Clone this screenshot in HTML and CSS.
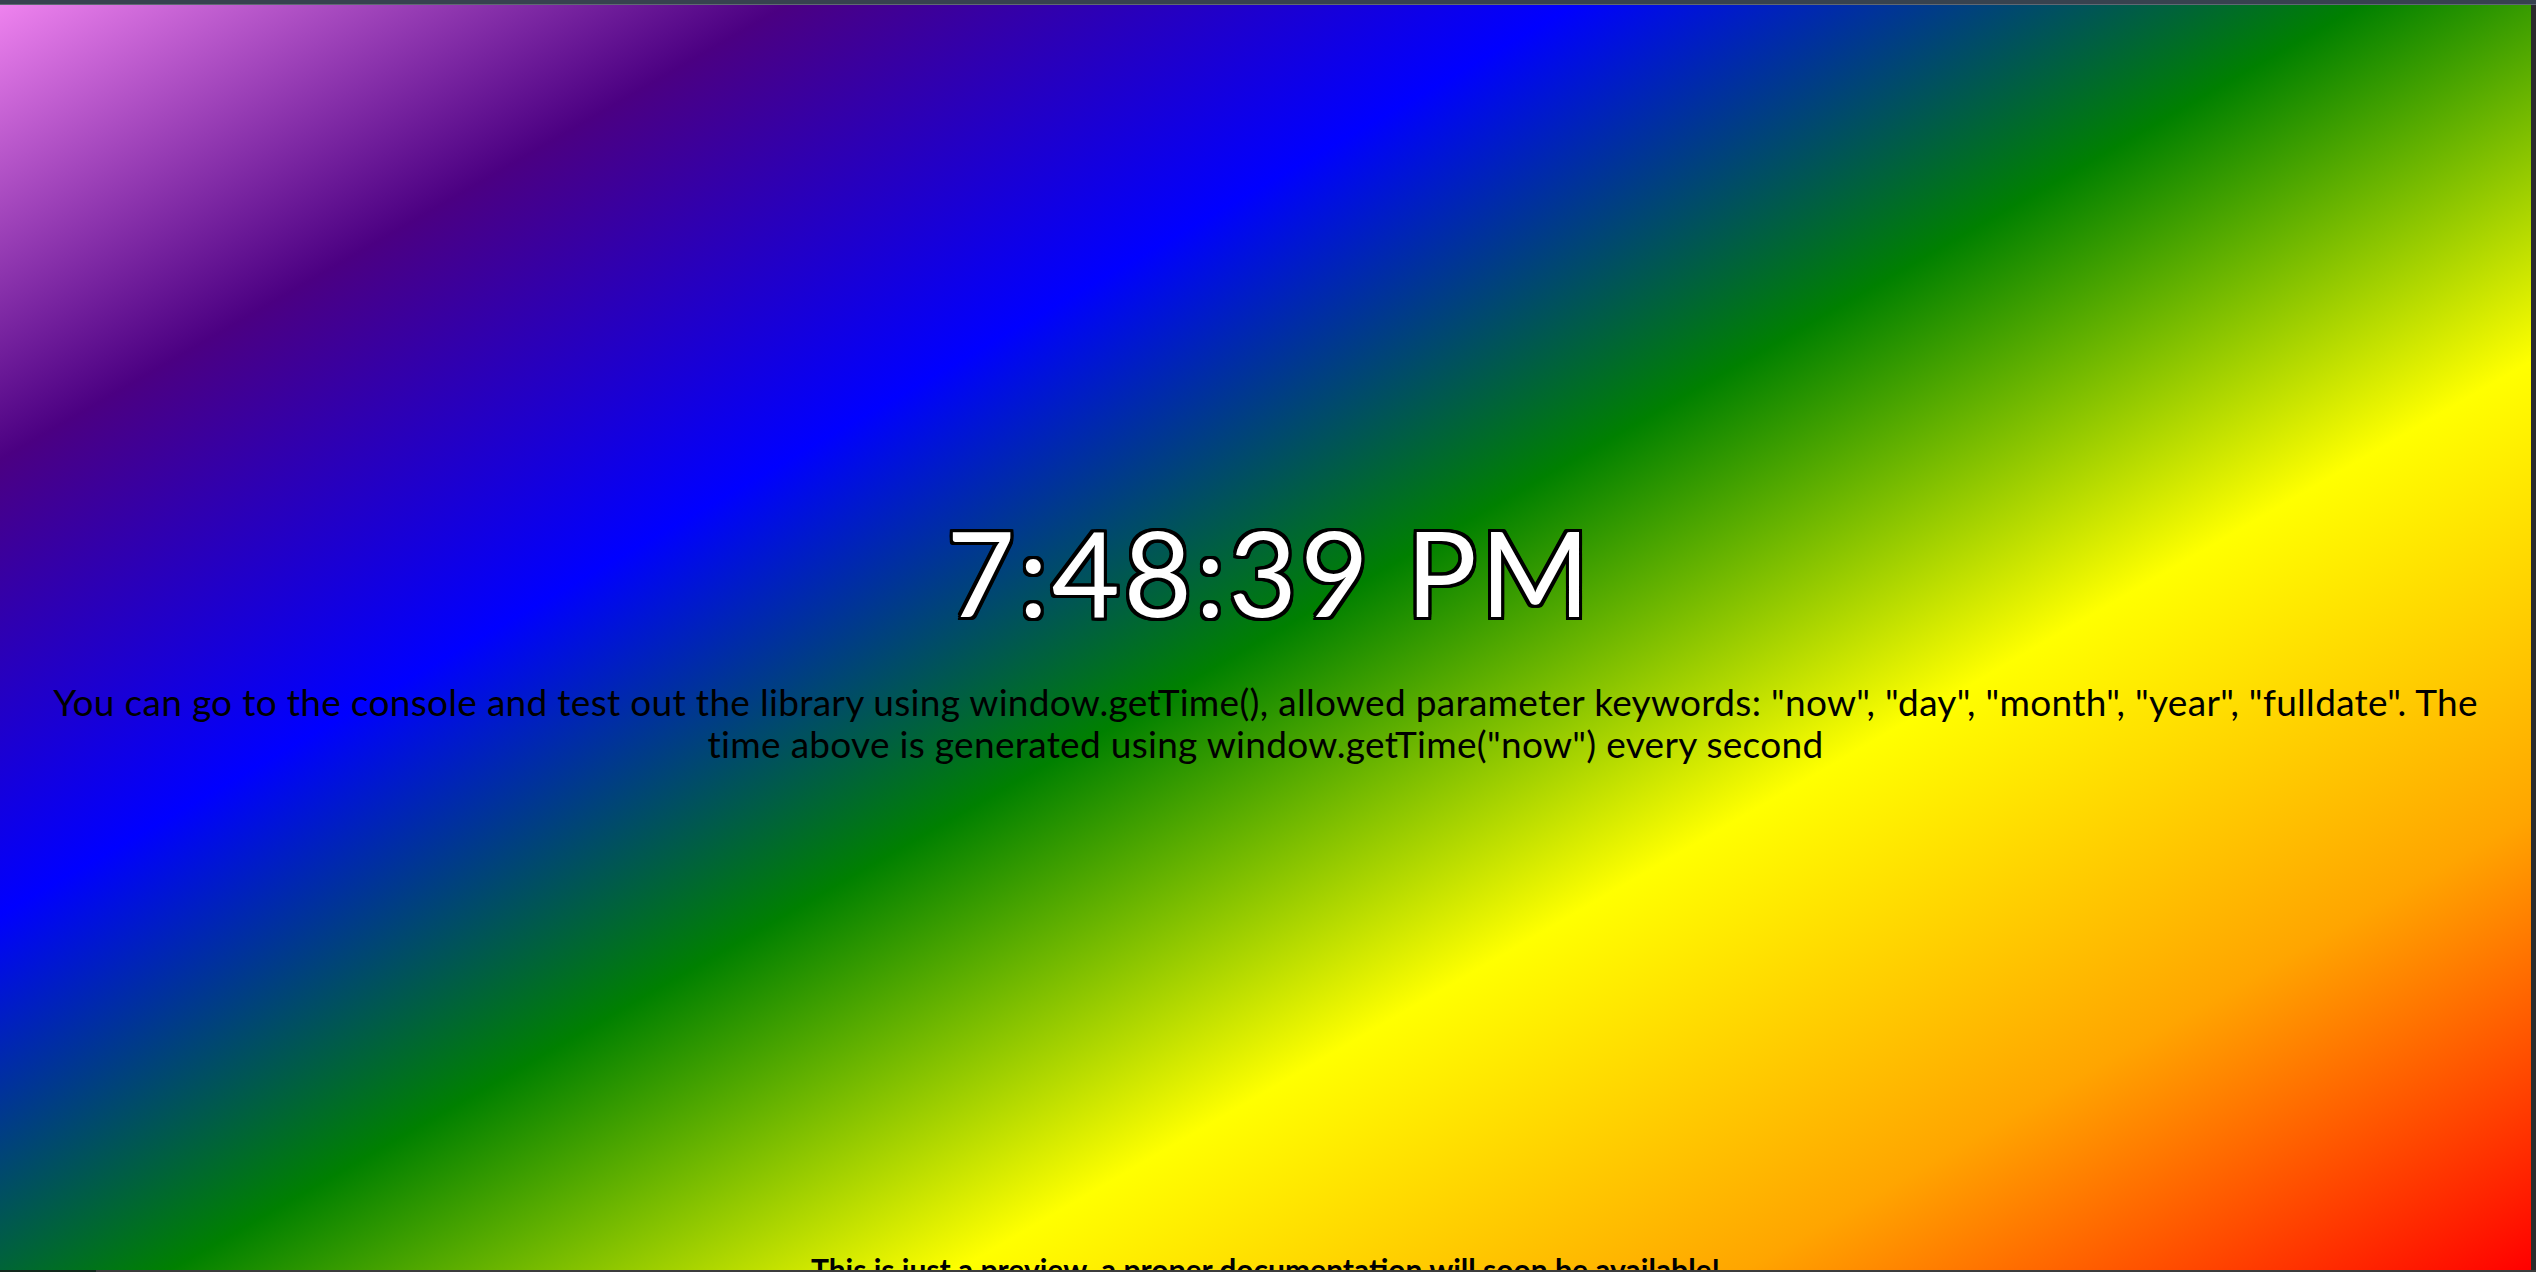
FILE: index.html
```html
<!DOCTYPE html>
<html lang="en">
<head>
<meta charset="utf-8">
<title>getTime preview</title>
<link rel="stylesheet" href="styles.css">
</head>
<body>
<div class="frame">
  <div class="frame-top"></div>
  <div class="frame-middle">
    <div class="page">
      <div class="clock">7:48:39 PM</div>
      <p class="info">You can go to the console and test out the library using window.getTime(), allowed parameter keywords: "now", "day", "month", "year", "fulldate". The<br>time above is generated using window.getTime("now") every second</p>
      <h2 class="note">This is just a preview, a proper documentation will soon be available!</h2>
    </div>
    <div class="frame-right"></div>
  </div>
  <div class="frame-bottom"><span class="seg-a"></span><span class="seg-b"></span></div>
</div>
</body>
</html>
```
FILE: styles.css
```css
html, body {
  margin: 0;
  padding: 0;
  background: #2b2b2b;
}
.frame {
  width: 2536px;
  height: 1272px;
  display: flex;
  flex-direction: column;
  overflow: hidden;
}
.frame-top {
  height: 4px;
  background: #37424f;
  border-bottom: 1px solid #5f6873;
  flex: none;
}
.frame-middle {
  display: flex;
  height: 1265px;
  flex: none;
}
.frame-right {
  width: 5px;
  background: #2b2b2b;
  flex: none;
}
.frame-bottom {
  height: 2px;
  display: flex;
  flex: none;
}
.seg-a {
  width: 96px;
  background: #12281c;
}
.seg-b {
  flex: 1;
  background: #3c3c3c;
}
.page {
  width: 2531px;
  height: 1265px;
  overflow: hidden;
  display: flex;
  flex-direction: column;
  align-items: center;
  background: linear-gradient(150deg, violet, indigo, blue, green, yellow, orange, red);
  font-family: Lato, "Liberation Sans", sans-serif;
  color: #000;
}
.clock {
  margin-top: 496px;
  padding-left: 9px;
  font-size: 118px;
  line-height: 142px;
  letter-spacing: 3.5px;
  color: #fff;
  text-shadow:
    -3px -3px 0 #000, 0 -3px 0 #000, 3px -3px 0 #000, 3px 0 0 #000,
    3px 3px 0 #000, 0 3px 0 #000, -3px 3px 0 #000, -3px 0 0 #000,
    -2px -3px 0 #000, 2px -3px 0 #000, -2px 3px 0 #000, 2px 3px 0 #000,
    -3px -2px 0 #000, 3px -2px 0 #000, -3px 2px 0 #000, 3px 2px 0 #000;
}
.info {
  margin: 38px 0 0;
  font-size: 37px;
  line-height: 42px;
  letter-spacing: 0.3px;
  text-align: center;
}
.note {
  margin: 486px 0 0;
  font-size: 30px;
  line-height: 36px;
  font-weight: bold;
  text-align: center;
}
```
